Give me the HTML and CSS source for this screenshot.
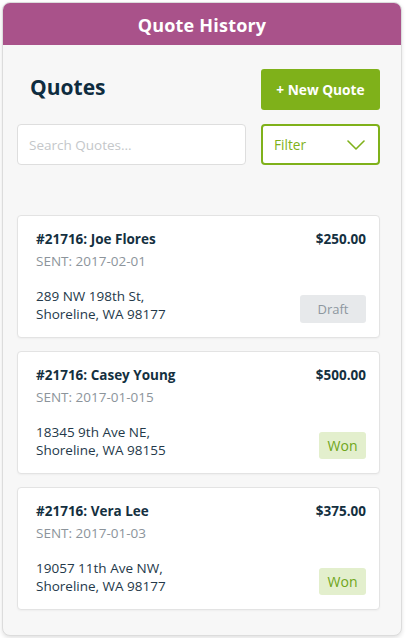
FILE: index.html
```html
<!DOCTYPE html>
<html lang="en">
<head>
    <meta charset="UTF-8">
    <meta name="viewport" content="width=device-width, initial-scale=1.0">
    <title>Quote History</title>
    <link rel="stylesheet" href="styles.css">
</head>
<body>
    <div class="app">
        <header class="app-header">Quote History</header>
        <main class="content">
            <div class="top-row">
                <h1>Quotes</h1>
                <button class="btn-new">+ New Quote</button>
            </div>
            <div class="search-row">
                <input class="search" type="text" placeholder="Search Quotes...">
                <button class="filter">
                    <span>Filter</span>
                    <svg width="18" height="10" viewBox="0 0 18 10">
                        <path d="M1 1 L9 9 L17 1" fill="none" stroke="#7fb11a" stroke-width="1.6" stroke-linecap="round" stroke-linejoin="round"/>
                    </svg>
                </button>
            </div>

            <div class="quotes">
                <div class="quote-card">
                    <div class="quote-head">
                        <span class="quote-title">#21716: Joe Flores</span>
                        <span class="quote-price">$250.00</span>
                    </div>
                    <div class="quote-sent">SENT: 2017-02-01</div>
                    <div class="quote-foot">
                        <div class="quote-address">289 NW 198th St,<br>Shoreline, WA 98177</div>
                        <span class="status draft">Draft</span>
                    </div>
                </div>

                <div class="quote-card">
                    <div class="quote-head">
                        <span class="quote-title">#21716: Casey Young</span>
                        <span class="quote-price">$500.00</span>
                    </div>
                    <div class="quote-sent">SENT: 2017-01-015</div>
                    <div class="quote-foot">
                        <div class="quote-address">18345 9th Ave NE,<br>Shoreline, WA 98155</div>
                        <span class="status won">Won</span>
                    </div>
                </div>

                <div class="quote-card">
                    <div class="quote-head">
                        <span class="quote-title">#21716: Vera Lee</span>
                        <span class="quote-price">$375.00</span>
                    </div>
                    <div class="quote-sent">SENT: 2017-01-03</div>
                    <div class="quote-foot">
                        <div class="quote-address">19057 11th Ave NW,<br>Shoreline, WA 98177</div>
                        <span class="status won">Won</span>
                    </div>
                </div>
            </div>
        </main>
    </div>
</body>
</html>
```

FILE: styles.css
```css
body {
    font-family: "Open Sans", Arial, sans-serif;
    background-color: #fff;
    color: #1f3646;
    margin: 0;
    padding: 0;
}

.app {
    margin: 2px;
    width: 398px;
    height: 632px;
    background-color: #f7f7f7;
    border: 1px solid #dcdcdc;
    border-radius: 8px;
    overflow: hidden;
    box-shadow: 0 2px 4px rgba(0, 0, 0, 0.12);
}

.app-header {
    height: 42px;
    background-color: #a9528a;
    color: #fff;
    font-size: 18px;
    font-weight: 700;
    line-height: 44px;
    text-align: center;
    letter-spacing: 0.2px;
}

.content {
    padding: 24px 21px 0 14px;
}

.top-row {
    display: flex;
    justify-content: space-between;
    align-items: center;
}

.top-row h1 {
    margin: 0 0 5px 13px;
    font-size: 21px;
    font-weight: 700;
    color: #0e2c3f;
}

.btn-new {
    width: 119px;
    height: 41px;
    background-color: #7fb11a;
    color: #fff;
    border: none;
    border-radius: 3px;
    font-family: inherit;
    font-size: 13.7px;
    font-weight: 700;
    cursor: pointer;
}

.search-row {
    display: flex;
    gap: 15px;
    margin-top: 14px;
}

.search {
    flex: 1;
    height: 41px;
    box-sizing: border-box;
    border: 1px solid #dedede;
    border-radius: 4px;
    padding: 0 11px;
    font-family: inherit;
    font-size: 13.5px;
    color: #333;
    background-color: #fff;
}

.search::placeholder {
    color: #c4c7ca;
}

.filter {
    width: 119px;
    height: 41px;
    display: flex;
    align-items: center;
    justify-content: space-between;
    padding: 0 13px 0 11px;
    background-color: #fff;
    border: 2px solid #7fb11a;
    border-radius: 4px;
    font-family: inherit;
    font-size: 13.7px;
    color: #7fb11a;
    cursor: pointer;
}

.quotes {
    display: flex;
    flex-direction: column;
    gap: 13px;
    margin-top: 50px;
}

.quote-card {
    background-color: #fff;
    border: 1px solid #e3e3e3;
    border-radius: 4px;
    padding: 13px 13px 14px 18px;
    box-shadow: 0 1px 2px rgba(0, 0, 0, 0.04);
}

.quote-head {
    display: flex;
    justify-content: space-between;
    font-size: 13.5px;
    font-weight: 700;
    line-height: 20px;
    color: #14303f;
}

.quote-sent {
    margin-top: 2px;
    font-size: 13.5px;
    line-height: 20px;
    color: #8c949b;
}

.quote-foot {
    display: flex;
    justify-content: space-between;
    align-items: flex-end;
    margin-top: 16px;
}

.quote-address {
    font-size: 13.5px;
    line-height: 18px;
    color: #24394a;
}

.status {
    font-size: 13px;
    line-height: 28px;
    border-radius: 3px;
    text-align: center;
}

.status.draft {
    width: 66px;
    background-color: #e7e9eb;
    color: #8d979f;
}

.status.won {
    width: 47px;
    line-height: 27px;
    font-size: 14px;
    background-color: #e3efcd;
    color: #6fa61a;
}
```
